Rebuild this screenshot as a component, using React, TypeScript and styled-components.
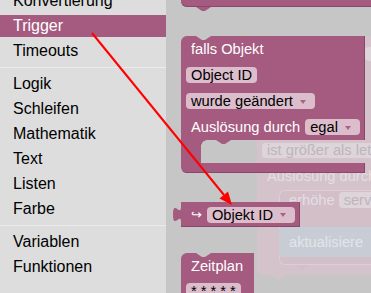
import React from "react";
import styled, { createGlobalStyle, css } from "styled-components";

const BLOCK = "#a55b80";
const BLOCK_DARK = "#874869";
const FIELD = "#dbbdcc";
const FLYOUT = "#c6c6c6";
const GHOST = "#d4c3cb";

const GlobalStyle = createGlobalStyle`
  html, body {
    margin: 0;
    padding: 0;
    overflow: hidden;
    background: ${FLYOUT};
  }
  body {
    font-family: "Liberation Sans", Arial, sans-serif;
  }
`;

const Screen = styled.div`
  position: relative;
  width: 371px;
  height: 293px;
  display: flex;
  overflow: hidden;
`;

/* ---------- toolbox ---------- */

const Toolbox = styled.nav`
  width: 166px;
  flex-shrink: 0;
  background: #dddddd;
  overflow: hidden;
`;

const CategoryList = styled.div`
  margin-top: -10px;
  display: flex;
  flex-direction: column;
`;

const Category = styled.div<{ $selected?: boolean }>`
  height: 22px;
  line-height: 22px;
  margin-bottom: 3px;
  padding-left: 13px;
  font-size: 16px;
  color: #000;
  white-space: nowrap;

  ${(p) =>
    p.$selected &&
    css`
      background: ${BLOCK};
      color: #fff;
    `}
`;

const Separator = styled.div`
  height: 1px;
  margin: 2px 0 5px;
  background: #ebebeb;
`;

/* ---------- flyout ---------- */

const Flyout = styled.div`
  position: relative;
  flex: 1;
  background: ${FLYOUT};
  overflow: hidden;
`;

const FlyoutColumn = styled.div`
  position: relative;
  z-index: 1;
  display: flex;
  flex-direction: column;
  align-items: flex-start;
  padding-left: 15px;
`;

const notchShape = css`
  content: "";
  position: absolute;
  width: 15px;
  height: 4px;
  clip-path: polygon(0 0, 100% 0, 60% 100%, 40% 100%);
`;

const blockBase = css`
  position: relative;
  background: ${BLOCK};
  color: #fff;
  font-size: 14.67px;
  white-space: nowrap;
`;

const CutBlock = styled.div`
  ${blockBase}
  width: 200px;
  height: 7px;
  border-bottom-left-radius: 6px;
  box-shadow: inset 0 -1px 0 ${BLOCK_DARK};

  &::after {
    ${notchShape}
    left: 15px;
    bottom: -4px;
    background: ${BLOCK};
  }
`;

const CBlock = styled.div`
  position: relative;
  width: 184px;
  margin-top: 29px;
  display: flex;
  flex-direction: column;
`;

const CHead = styled.div`
  ${blockBase}
  display: flex;
  flex-direction: column;
  border-top-left-radius: 6px;
  box-shadow: inset -1px 0 0 ${BLOCK_DARK};

  &::before {
    ${notchShape}
    left: 15px;
    top: 0;
    background: ${FLYOUT};
  }

  &::after {
    ${notchShape}
    left: 35px;
    bottom: -4px;
    background: ${BLOCK};
  }
`;

const CMouth = styled.div`
  height: 23px;
  display: flex;
`;

const CArm = styled.div`
  position: relative;
  width: 20px;
  background: ${BLOCK};

  &::after {
    content: "";
    position: absolute;
    top: 0;
    right: -6px;
    width: 6px;
    height: 6px;
    background: radial-gradient(circle at 100% 100%, transparent 5.5px, ${BLOCK} 6px);
  }
`;

const CFoot = styled.div`
  ${blockBase}
  height: 10px;
  border-bottom-left-radius: 6px;
  box-shadow: inset -1px -1px 0 ${BLOCK_DARK};
`;

const BlockRow = styled.div<{ $inset?: number; $height?: number }>`
  height: ${(p) => p.$height ?? 26}px;
  display: flex;
  align-items: center;
  gap: 5px;
  padding-left: ${(p) => p.$inset ?? 10}px;
`;

const Field = styled.span`
  display: inline-flex;
  align-items: center;
  height: 16px;
  padding: 0 5px;
  border-radius: 4px;
  background: ${FIELD};
  color: #000;
  font-size: 14.67px;
  line-height: 16px;
`;

const DropArrow = styled.span`
  width: 0;
  height: 0;
  margin: 1px 4px 0 7px;
  border-left: 3px solid transparent;
  border-right: 3px solid transparent;
  border-top: 4px solid #a9648a;
`;

const ValueBlock = styled.div`
  ${blockBase}
  margin-top: 29px;
  height: 25px;
  display: flex;
  align-items: center;
  gap: 5px;
  padding: 0 5px 0 10px;
  box-shadow: inset -1px -1px 0 ${BLOCK_DARK};
`;

const OutputTab = styled.svg`
  position: absolute;
  left: -8px;
  top: 0;
  width: 9px;
  height: 25px;
`;

const ReturnGlyph = styled.span`
  font-family: "DejaVu Sans", sans-serif;
  font-size: 13px;
  color: #fff;
`;

const HatBlock = styled.div`
  ${blockBase}
  margin-top: 26px;
  width: 73px;
  height: 60px;
  border-top-left-radius: 6px;

  &::before {
    ${notchShape}
    left: 15px;
    top: 0;
    background: ${FLYOUT};
  }
`;

/* ---------- faded workspace behind the flyout ---------- */

const GhostBlock = styled.div`
  position: absolute;
  left: 91px;
  top: 36px;
  width: 140px;
  height: 239px;
  z-index: 0;
  display: flex;
  flex-direction: column;
  align-items: flex-start;
  background: ${GHOST};
  border-radius: 8px 0 0 6px;
  font-size: 14.67px;
  white-space: nowrap;

  &::after {
    ${notchShape}
    left: 14px;
    bottom: -4px;
    background: ${GHOST};
  }
`;

const GhostPeek = styled.div`
  margin: 11px 0 0 108px;
  width: 30px;
  height: 14px;
  border-radius: 4px;
  background: #ddd5d9;
`;

const GhostField = styled.div`
  margin: 82px 0 0 5px;
  height: 15px;
  line-height: 15px;
  padding: 0 5px;
  border-radius: 4px;
  background: #ddd5d9;
  color: #bfb4b9;
`;

const GhostLabel = styled.div`
  margin: 10px 0 0 10px;
  line-height: 16px;
  color: #e6dee2;
`;

const GhostInner = styled.div`
  position: relative;
  margin: 6px 0 0 22px;
  width: 130px;
  height: 75px;
  display: flex;
  flex-direction: column;
  background: #d2bfc8;
  border: 1px solid #ddcdd5;
  border-right: none;
  border-radius: 6px 0 0 6px;
  box-sizing: border-box;

  &::after {
    ${notchShape}
    left: 14px;
    bottom: -5px;
    background: #d2bfc8;
  }
`;

const GhostRow = styled.div`
  margin-top: 1px;
  height: 16px;
  display: flex;
  align-items: center;
  gap: 4px;
  padding-left: 9px;
  color: #e6dee2;
`;

const GhostChip = styled.span`
  height: 16px;
  line-height: 16px;
  padding: 0 5px;
  border-radius: 4px;
  background: #ddd5d9;
  color: #bfb4b9;
`;

const GhostValue = styled.div`
  margin: 19px 0 0 -1px;
  height: 30px;
  display: flex;
  align-items: center;
  padding-left: 10px;
  background: #c8cdd5;
  border-radius: 4px 0 0 4px;
  color: #e2e5ea;
`;

/* ---------- annotation ---------- */

const ArrowLayer = styled.svg`
  position: absolute;
  left: 0;
  top: 0;
  width: 371px;
  height: 293px;
  z-index: 5;
  pointer-events: none;
`;

const categories = [
  "Konvertierung",
  "Trigger",
  "Timeouts",
  null,
  "Logik",
  "Schleifen",
  "Mathematik",
  "Text",
  "Listen",
  "Farbe",
  null,
  "Variablen",
  "Funktionen",
];

export default function App() {
  return (
    <>
      <GlobalStyle />
      <Screen>
        <Toolbox>
          <CategoryList>
            {categories.map((name, i) =>
              name === null ? (
                <Separator key={i} />
              ) : (
                <Category key={i} $selected={name === "Trigger"}>
                  {name}
                </Category>
              )
            )}
          </CategoryList>
        </Toolbox>

        <Flyout>
          <GhostBlock>
            <GhostPeek />
            <GhostField>ist größer als letzter</GhostField>
            <GhostLabel>Auslösung durch</GhostLabel>
            <GhostInner>
              <GhostRow>
                erhöhe <GhostChip>service</GhostChip>
              </GhostRow>
              <GhostValue>aktualisiere</GhostValue>
            </GhostInner>
          </GhostBlock>

          <FlyoutColumn>
            <CutBlock />

            <CBlock>
              <CHead>
                <BlockRow>falls Objekt</BlockRow>
                <BlockRow $inset={5}>
                  <Field>Object ID</Field>
                </BlockRow>
                <BlockRow $inset={5}>
                  <Field>
                    wurde geändert
                    <DropArrow />
                  </Field>
                </BlockRow>
                <BlockRow>
                  Auslösung durch
                  <Field>
                    egal
                    <DropArrow />
                  </Field>
                </BlockRow>
              </CHead>
              <CMouth>
                <CArm />
              </CMouth>
              <CFoot />
            </CBlock>

            <ValueBlock>
              <OutputTab viewBox="0 0 9 25">
                <path d="M9 5 H8 c0 10 -8 -8 -8 7.5 s8 -2.5 8 7.5 H9 Z" fill={BLOCK} />
              </OutputTab>
              <ReturnGlyph>↪</ReturnGlyph>
              <Field>
                Objekt ID
                <DropArrow />
              </Field>
            </ValueBlock>

            <HatBlock>
              <BlockRow $height={25}>Zeitplan</BlockRow>
              <BlockRow $inset={5} $height={26}>
                <Field>* * * * *</Field>
              </BlockRow>
            </HatBlock>
          </FlyoutColumn>
        </Flyout>

        <ArrowLayer viewBox="0 0 371 293">
          <line x1="92" y1="33" x2="224" y2="195" stroke="#ff0000" strokeWidth="2" />
          <polygon points="232,205 219.5,198.5 228,191.5" fill="#ff0000" />
        </ArrowLayer>
      </Screen>
    </>
  );
}
